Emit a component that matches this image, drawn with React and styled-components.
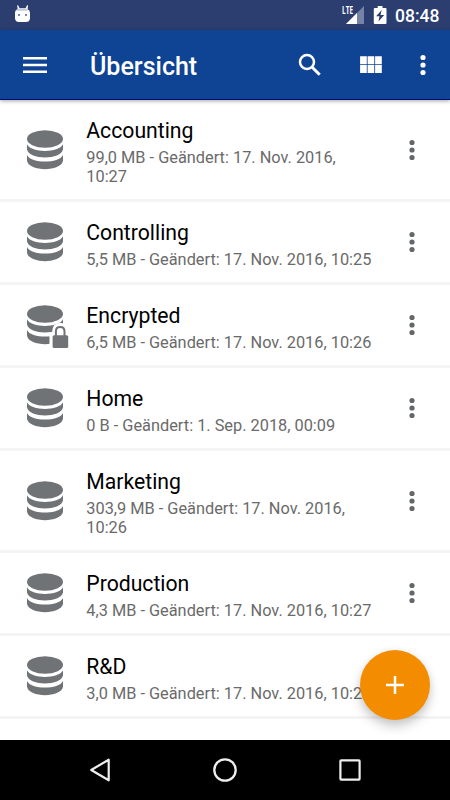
import React from "react";
import styled, { createGlobalStyle } from "styled-components";

const GlobalStyle = createGlobalStyle`
  * { box-sizing: border-box; }
  body { margin: 0; background: #fff; font-family: Roboto, sans-serif; }
`;

const Screen = styled.div`
  position: relative;
  display: flex;
  flex-direction: column;
  width: 450px;
  height: 800px;
  overflow: hidden;
  background: #fff;
`;

const StatusBar = styled.div`
  display: flex;
  flex: none;
  align-items: center;
  justify-content: space-between;
  height: 30px;
  padding: 0 10.5px 0 14px;
  background: #2c3e70;
`;

const StatusGroup = styled.div`
  display: flex;
  align-items: center;
`;

const Clock = styled.span`
  margin-left: 7px;
  padding-top: 1px;
  color: #fff;
  font-size: 17.5px;
  line-height: 30px;
  font-weight: 500;
`;

const Toolbar = styled.header`
  z-index: 1;
  display: flex;
  flex: none;
  align-items: center;
  height: 70px;
  padding: 1px 0 0 20px;
  background: #0f4394;
  border-bottom: 1px solid #000b7c;
  box-shadow: 0 1px 4px rgba(0, 0, 0, 0.36);
`;

const Title = styled.h1`
  flex: 1;
  margin: 0;
  padding: 3px 0 0 40px;
  color: #fff;
  font-size: 25px;
  line-height: 30px;
  font-weight: 500;
`;

const ToolbarActions = styled.div`
  display: flex;
  align-items: center;
  padding-right: 12.5px;

  > :nth-child(2) { margin: 0 22px 0 31px; }
`;

const IconButton = styled.button`
  display: flex;
  flex: none;
  padding: 0;
  border: 0;
  background: none;
  color: ${(p) => p.$color || "#fff"};
`;

const List = styled.main`
  flex: 1;
  min-height: 0;
  overflow: hidden;
`;

const Row = styled.div`
  display: flex;
  align-items: center;
  border-bottom: 3px solid #f4f4f4;
`;

const RowIcon = styled.div`
  display: flex;
  flex: none;
  width: 86.3px;
  padding-left: 25px;
`;

const RowText = styled.div`
  flex: none;
  width: 288.7px;
  padding: 18px 0 13px;
`;

const Name = styled.div`
  color: #000;
  font-size: 21.2px;
  line-height: 25px;
`;

const Details = styled.div`
  margin-top: 5px;
  color: #6a6a6a;
  font-size: 16.33px;
  line-height: 19px;
`;

const RowMenu = styled.div`
  display: flex;
  flex: 1;
  justify-content: center;
`;

const Fab = styled.button`
  position: absolute;
  z-index: 2;
  right: 20px;
  bottom: 80px;
  display: flex;
  align-items: center;
  justify-content: center;
  width: 70px;
  height: 70px;
  padding: 0;
  border: 0;
  border-radius: 50%;
  background: #f48c00;
  box-shadow: 0 7px 11px rgba(0, 0, 0, 0.18), 0 1px 8px rgba(0, 0, 0, 0.08);
`;

const NavBar = styled.nav`
  display: flex;
  flex: none;
  align-items: center;
  justify-content: center;
  gap: 95px;
  height: 60px;
  background: #000;
`;

const OpenSvg = styled.svg`
  overflow: visible;
`;

const SignalText = styled.text`
  font-family: "Open Sans", sans-serif;
  font-size: 10.5px;
  font-weight: 700;
`;

function RobotIcon() {
  return (
    <svg width="18" height="20" viewBox="0 0 18 20">
      <path d="M4 0 5.6 3.3H11.6L13.2 0 14 .4 13.6 4.2Q16 5 16 8V13.5Q15.5 17 12 17H5Q1.5 17 1 13.5V8Q1 5 3.7 4.2L3.2.4Z" fill="#fff" />
      <path d="M3.5 3.8H13.5V5.8H2.2Z" fill="#c5cad8" />
      <path d="M4 9h2v2H4zM11 9h2v2h-2z" fill="#7d89a8" />
    </svg>
  );
}

function SignalIcon() {
  return (
    <OpenSvg width="24" height="20" viewBox="0 0 24 20">
      <path d="M22 1V19H4Z" fill="#7583a6" />
      <path d="M15 8V19H4Z" fill="#fff" />
      <SignalText x="0" y="9" textLength="11" lengthAdjust="spacingAndGlyphs" fill="#fff">LTE</SignalText>
    </OpenSvg>
  );
}

function BatteryIcon() {
  return (
    <svg width="22" height="20" viewBox="0 0 22 20">
      <path d="M11.7 1H16.5v2h3q1 0 1 1V18q0 1-1 1H8.8q-1 0-1-1V4q0-1 1-1h2.9Z" fill="#fff" />
      <path d="M15.7 5 10.1 11.3H13.5L12.5 16.5 18.2 9.9H14.5Z" fill="#2c3e70" />
    </svg>
  );
}

function MenuIcon() {
  return (
    <svg width="30" height="30" viewBox="0 0 30 30">
      <path d="M3 8.3H27M3 15H27M3 21.7H27" stroke="#fff" strokeWidth="2.5" />
    </svg>
  );
}

function SearchIcon() {
  return (
    <svg width="30" height="30" viewBox="0 0 30 30" fill="none" stroke="#fff">
      <circle cx="12" cy="12" r="7" strokeWidth="2.5" />
      <path d="m17.2 17.2 7.5 7.5" strokeWidth="3" />
    </svg>
  );
}

function GridIcon() {
  return (
    <svg width="30" height="30" viewBox="0 0 30 30" fill="#fff">
      <path d="M4.1 6.3h6.7v7.9H4.1zM11.6 6.3h6.7v7.9h-6.7zM19.1 6.3h6.7v7.9h-6.7zM4.1 15h6.7v7.9H4.1zM11.6 15h6.7v7.9h-6.7zM19.1 15h6.7v7.9h-6.7z" />
    </svg>
  );
}

function DotsIcon() {
  return (
    <svg width="30" height="30" viewBox="0 0 30 30" fill="currentColor">
      <circle cx="15" cy="7.5" r="2.6" />
      <circle cx="15" cy="15" r="2.6" />
      <circle cx="15" cy="22.5" r="2.6" />
    </svg>
  );
}

function DatabaseIcon({ locked }) {
  return (
    <OpenSvg width="46" height="46" viewBox="0 0 46 46" fill="#6f7376">
      <ellipse cx="20" cy="12" rx="18" ry="8.7" />
      <path d="M2 17.3C6 26.1 34 26.1 38 17.3V22.5C36 33 4 33 2 22.5Z" />
      <path d="M2 28C6 36.8 34 36.8 38 28V33.8C36 44.9 4 44.9 2 33.8Z" />
      {locked && (
        <g>
          <path d="M24.5 47V32.5Q24.5 31 27 31Q27 20.8 35.2 20.8Q41 20.8 43.3 27V47Z" fill="#fff" />
          <path d="M30.9 34.5V29.3Q30.9 24.9 35.2 24.9T39.5 29.3V34.5" fill="none" stroke="#6f7376" strokeWidth="2" />
          <rect x="27.6" y="33.2" width="15.6" height="12.9" rx="1.5" />
        </g>
      )}
    </OpenSvg>
  );
}

const folders = [
  { name: "Accounting", size: "99,0 MB", changed: "17. Nov. 2016, 10:27" },
  { name: "Controlling", size: "5,5 MB", changed: "17. Nov. 2016, 10:25" },
  { name: "Encrypted", size: "6,5 MB", changed: "17. Nov. 2016, 10:26", locked: true },
  { name: "Home", size: "0 B", changed: "1. Sep. 2018, 00:09" },
  { name: "Marketing", size: "303,9 MB", changed: "17. Nov. 2016, 10:26" },
  { name: "Production", size: "4,3 MB", changed: "17. Nov. 2016, 10:27" },
  { name: "R&D", size: "3,0 MB", changed: "17. Nov. 2016, 10:26", covered: true },
];

function FolderRow({ name, size, changed, locked, covered }) {
  return (
    <Row>
      <RowIcon><DatabaseIcon locked={locked} /></RowIcon>
      <RowText>
        <Name>{name}</Name>
        <Details>{`${size} - Geändert: ${changed}`}</Details>
      </RowText>
      <RowMenu>
        {!covered && <IconButton $color="#63676a" aria-label="Optionen"><DotsIcon /></IconButton>}
      </RowMenu>
    </Row>
  );
}

export default function App() {
  return (
    <Screen>
      <GlobalStyle />
      <StatusBar>
        <RobotIcon />
        <StatusGroup>
          <SignalIcon />
          <BatteryIcon />
          <Clock>08:48</Clock>
        </StatusGroup>
      </StatusBar>
      <Toolbar>
        <IconButton aria-label="Menü"><MenuIcon /></IconButton>
        <Title>Übersicht</Title>
        <ToolbarActions>
          <IconButton aria-label="Suchen"><SearchIcon /></IconButton>
          <IconButton aria-label="Raster"><GridIcon /></IconButton>
          <IconButton aria-label="Mehr"><DotsIcon /></IconButton>
        </ToolbarActions>
      </Toolbar>
      <List>
        {folders.map((f) => <FolderRow key={f.name} {...f} />)}
      </List>
      <Fab aria-label="Hinzufügen">
        <svg width="20" height="20" viewBox="0 0 20 20">
          <path d="M10 1V19M1 10H19" stroke="#fff" strokeWidth="2.5" />
        </svg>
      </Fab>
      <NavBar>
        <svg width="30" height="30" viewBox="0 0 30 30" fill="none" stroke="#eee">
          <path d="M6.2 15 23.7 4.7V25.3Z" strokeWidth="2.2" strokeLinejoin="round" />
        </svg>
        <svg width="30" height="30" viewBox="0 0 30 30" fill="none" stroke="#eee">
          <circle cx="15" cy="15" r="10.7" strokeWidth="2.3" />
        </svg>
        <svg width="30" height="30" viewBox="0 0 30 30" fill="none" stroke="#eee">
          <rect x="5.4" y="5.4" width="19.2" height="19.2" rx="0.8" strokeWidth="2.2" />
        </svg>
      </NavBar>
    </Screen>
  );
}
